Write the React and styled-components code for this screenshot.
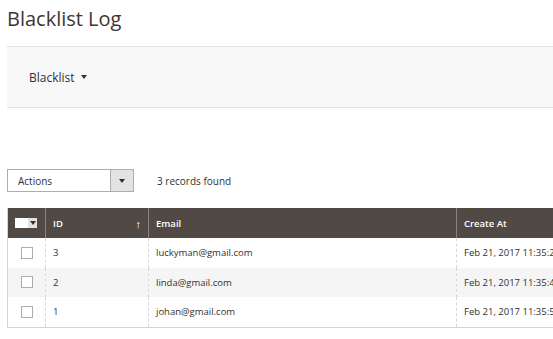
import React from 'react';
import styled, { createGlobalStyle } from 'styled-components';

const Global = createGlobalStyle`
    body {
        margin: 0;
        background: #fff;
        font-family: "Open Sans", "Liberation Sans", sans-serif;
        color: #303030;
        overflow: hidden;
    }
`;

const Page = styled.div`
    width: 553px;
    height: 339px;
    overflow: hidden;
    padding-left: 7px;
    box-sizing: border-box;
`;

const Title = styled.h1`
    margin: 0;
    padding-top: 4px;
    height: 42px;
    font-size: 20px;
    font-weight: 400;
    color: #41362f;
    line-height: 30px;
`;

const Switcher = styled.div`
    height: 62px;
    width: 560px;
    background: #f8f8f8;
    border-top: 1px solid #e3e3e3;
    border-bottom: 1px solid #e3e3e3;
    display: flex;
    align-items: center;
    padding-left: 22px;
    box-sizing: border-box;
    font-size: 12px;
    color: #303030;
`;

const Caret = styled.span`
    display: inline-block;
    margin-left: ${p => p.$gap ?? 0}px;
    width: 0;
    height: 0;
    border-left: 3.5px solid transparent;
    border-right: 3.5px solid transparent;
    border-top: 4px solid #303030;
`;

const Toolbar = styled.div`
    margin-top: 61px;
    display: flex;
    align-items: center;
    height: 23px;
`;

const Select = styled.div`
    width: 127px;
    height: 23px;
    box-sizing: border-box;
    border: 1px solid #adadad;
    display: flex;
    font-size: 10px;
`;

const SelectLabel = styled.div`
    flex: 1;
    padding-left: 10px;
    display: flex;
    align-items: center;
    color: #303030;
`;

const SelectButton = styled.div`
    width: 22px;
    border-left: 1px solid #adadad;
    background: #e3e3e3;
    display: flex;
    align-items: center;
    justify-content: center;
`;

const Count = styled.div`
    margin-left: 23px;
    font-size: 10px;
    color: #303030;
`;

const Table = styled.table`
    margin-top: 16px;
    border-collapse: collapse;
    table-layout: fixed;
    width: 560px;
    font-size: 9.5px;
    border-left: 1px solid #d6d6d6;
    border-bottom: 1px solid #d6d6d6;

    th {
        background: #514943;
        color: #fff;
        font-weight: 600;
        text-align: left;
        height: 30px;
        padding: 0 7px;
        box-sizing: border-box;
        border-left: 1px solid #8a837f;
        &:first-child { border-left: 0; }
    }

    td {
        height: 29.5px;
        padding: 0 7px;
        border-left: 1px dashed #d6d6d6;
        color: #303030;
        white-space: nowrap;
        overflow: hidden;
        &:first-child { border-left: 0; }
    }

    tbody tr:nth-child(even) td {
        background: #f5f5f5;
    }
`;

const HeadCell = styled.div`
    display: flex;
    align-items: center;
    justify-content: space-between;
`;

const Arrow = styled.span`
    font-weight: 400;
    font-size: 11px;
    color: #fff;
`;

const MassSelect = styled.div`
    display: flex;
    align-items: center;
    height: 10px;
    width: 22px;
`;

const MassBox = styled.div`
    width: 13px;
    height: 10px;
    background: #fff;
`;

const MassDrop = styled.div`
    width: 9px;
    height: 10px;
    background: #e3e3e3;
    display: flex;
    align-items: center;
    justify-content: center;
`;

const Check = styled.div`
    width: 10px;
    height: 10px;
    border: 1px solid #adadad;
    background: #fff;
    margin-left: 6px;
`;

const rows = [
    { id: 3, email: 'luckyman@gmail.com', created: 'Feb 21, 2017 11:35:24 AM' },
    { id: 2, email: 'linda@gmail.com', created: 'Feb 21, 2017 11:35:41 AM' },
    { id: 1, email: 'johan@gmail.com', created: 'Feb 21, 2017 11:35:53 AM' },
];

const App = () => {
    return (
        <>
            <Global />
            <Page>
                <Title>Blacklist Log</Title>
                <Switcher>
                    Blacklist <Caret $gap={6} />
                </Switcher>
                <Toolbar>
                    <Select>
                        <SelectLabel>Actions</SelectLabel>
                        <SelectButton><Caret /></SelectButton>
                    </Select>
                    <Count>3 records found</Count>
                </Toolbar>
                <Table>
                    <colgroup>
                        <col width="38" />
                        <col width="103" />
                        <col width="308" />
                        <col />
                    </colgroup>
                    <thead>
                        <tr>
                            <th>
                                <MassSelect>
                                    <MassBox />
                                    <MassDrop><Caret /></MassDrop>
                                </MassSelect>
                            </th>
                            <th><HeadCell>ID <Arrow>↑</Arrow></HeadCell></th>
                            <th>Email</th>
                            <th>Create At</th>
                        </tr>
                    </thead>
                    <tbody>
                        {rows.map(r => (
                            <tr key={r.id}>
                                <td><Check /></td>
                                <td>{r.id}</td>
                                <td>{r.email}</td>
                                <td>{r.created}</td>
                            </tr>
                        ))}
                    </tbody>
                </Table>
            </Page>
        </>
    );
};

export default App;
